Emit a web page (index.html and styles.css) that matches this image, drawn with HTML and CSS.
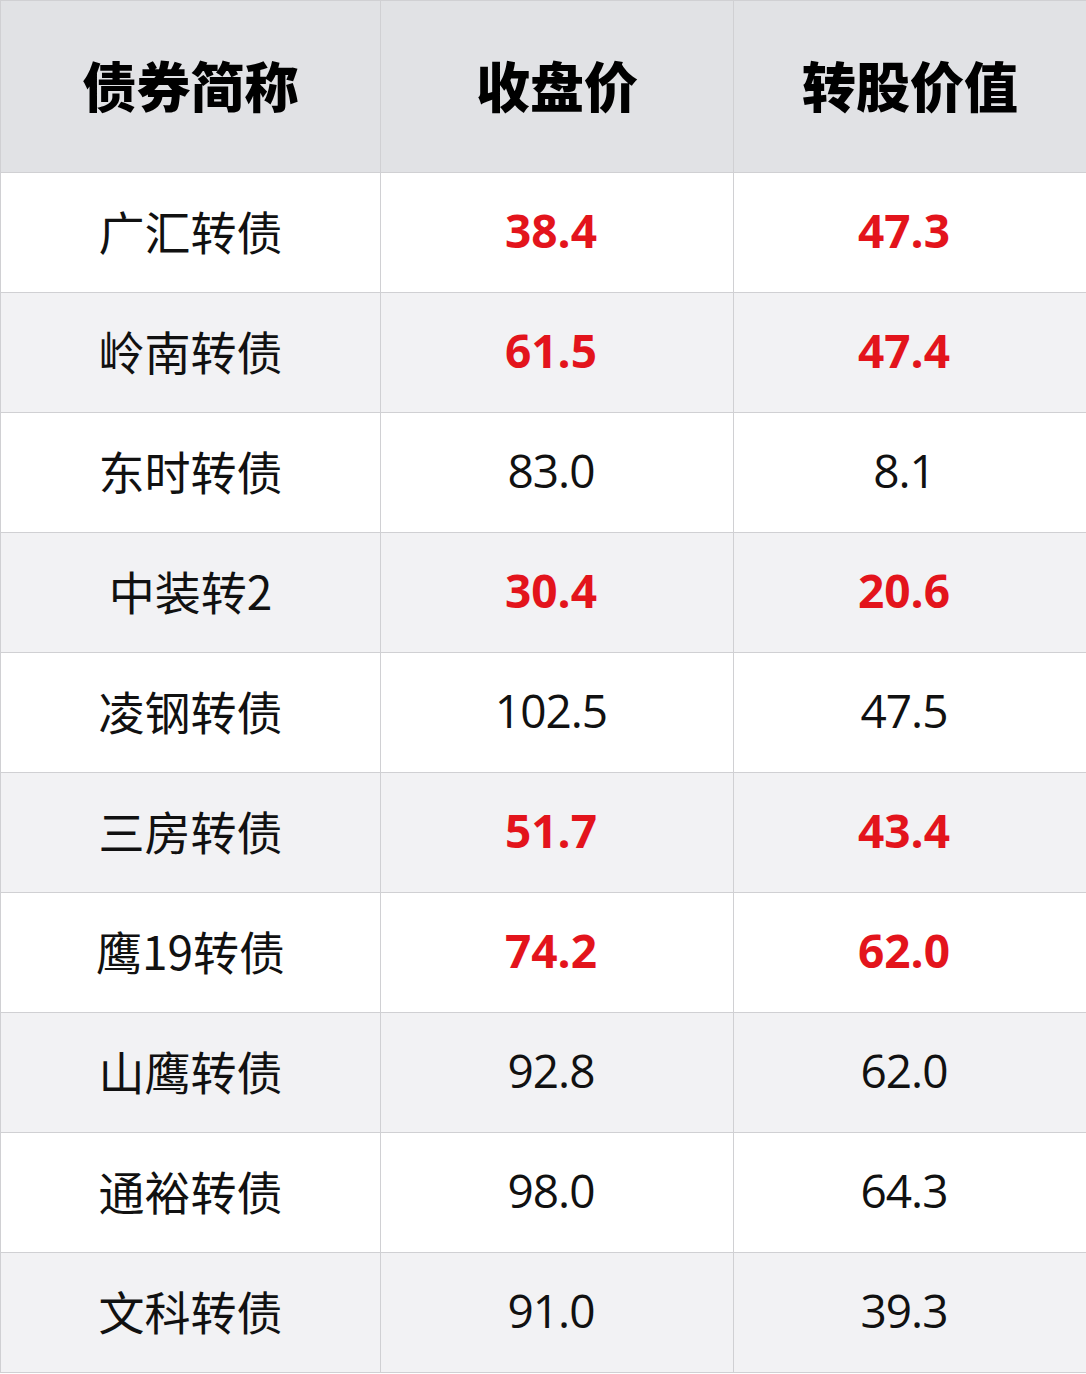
FILE: index.html
```html
<!DOCTYPE html>
<html lang="zh-CN">
<head>
<meta charset="utf-8">
<title>转债</title>
<link rel="stylesheet" href="styles.css">
</head>
<body>
<table class="bonds">
  <colgroup><col class="c1"><col class="c2"><col class="c3"></colgroup>
  <thead>
    <tr><th>债券简称</th><th>收盘价</th><th>转股价值</th></tr>
  </thead>
  <tbody>
    <tr><td class="name">广汇转债</td><td class="num hi">38.4</td><td class="num hi">47.3</td></tr>
    <tr><td class="name">岭南转债</td><td class="num hi">61.5</td><td class="num hi">47.4</td></tr>
    <tr><td class="name">东时转债</td><td class="num">83.0</td><td class="num">8.1</td></tr>
    <tr><td class="name">中装转2</td><td class="num hi">30.4</td><td class="num hi">20.6</td></tr>
    <tr><td class="name">凌钢转债</td><td class="num">102.5</td><td class="num">47.5</td></tr>
    <tr><td class="name">三房转债</td><td class="num hi">51.7</td><td class="num hi">43.4</td></tr>
    <tr><td class="name">鹰19转债</td><td class="num hi">74.2</td><td class="num hi">62.0</td></tr>
    <tr><td class="name">山鹰转债</td><td class="num">92.8</td><td class="num">62.0</td></tr>
    <tr><td class="name">通裕转债</td><td class="num">98.0</td><td class="num">64.3</td></tr>
    <tr><td class="name">文科转债</td><td class="num">91.0</td><td class="num">39.3</td></tr>
  </tbody>
</table>
</body>
</html>
```
FILE: styles.css
```css
html, body {
  margin: 0;
  padding: 0;
  background: #ffffff;
}
.bonds {
  border-collapse: collapse;
  width: 1086px;
  table-layout: fixed;
  font-family: "Open Sans", "Noto Sans CJK SC", sans-serif;
  color: #111111;
}
.c1 { width: 380px; }
.c2 { width: 353px; }
.c3 { width: 353px; }
.bonds th, .bonds td {
  border: 1px solid #d0d0d3;
  text-align: center;
  padding: 0;
  box-sizing: border-box;
  line-height: 1.2;
}
.bonds thead tr { height: 172px; }
.bonds tbody tr { height: 120px; }
.bonds th {
  height: 172px;
  background: #e1e2e5;
  font-family: "Noto Sans CJK SC", sans-serif;
  font-weight: 900;
  font-size: 54px;
  color: #000000;
  padding-bottom: 2px;
}
.bonds td {
  height: 120px;
}
.bonds tbody tr:nth-child(odd) td { background: #ffffff; }
.bonds tbody tr:nth-child(even) td { background: #f2f2f4; }
.name {
  font-family: "Noto Sans CJK SC", sans-serif;
  font-size: 46px;
  font-weight: 400;
  padding-bottom: 4px !important;
}
.num {
  font-family: "Open Sans", sans-serif;
  font-size: 46px;
  font-weight: 400;
  letter-spacing: -1px;
  padding-right: 12px !important;
  padding-bottom: 4px !important;
}
.num.hi {
  color: #e3141c;
  font-weight: 700;
  letter-spacing: 0;
}
```
